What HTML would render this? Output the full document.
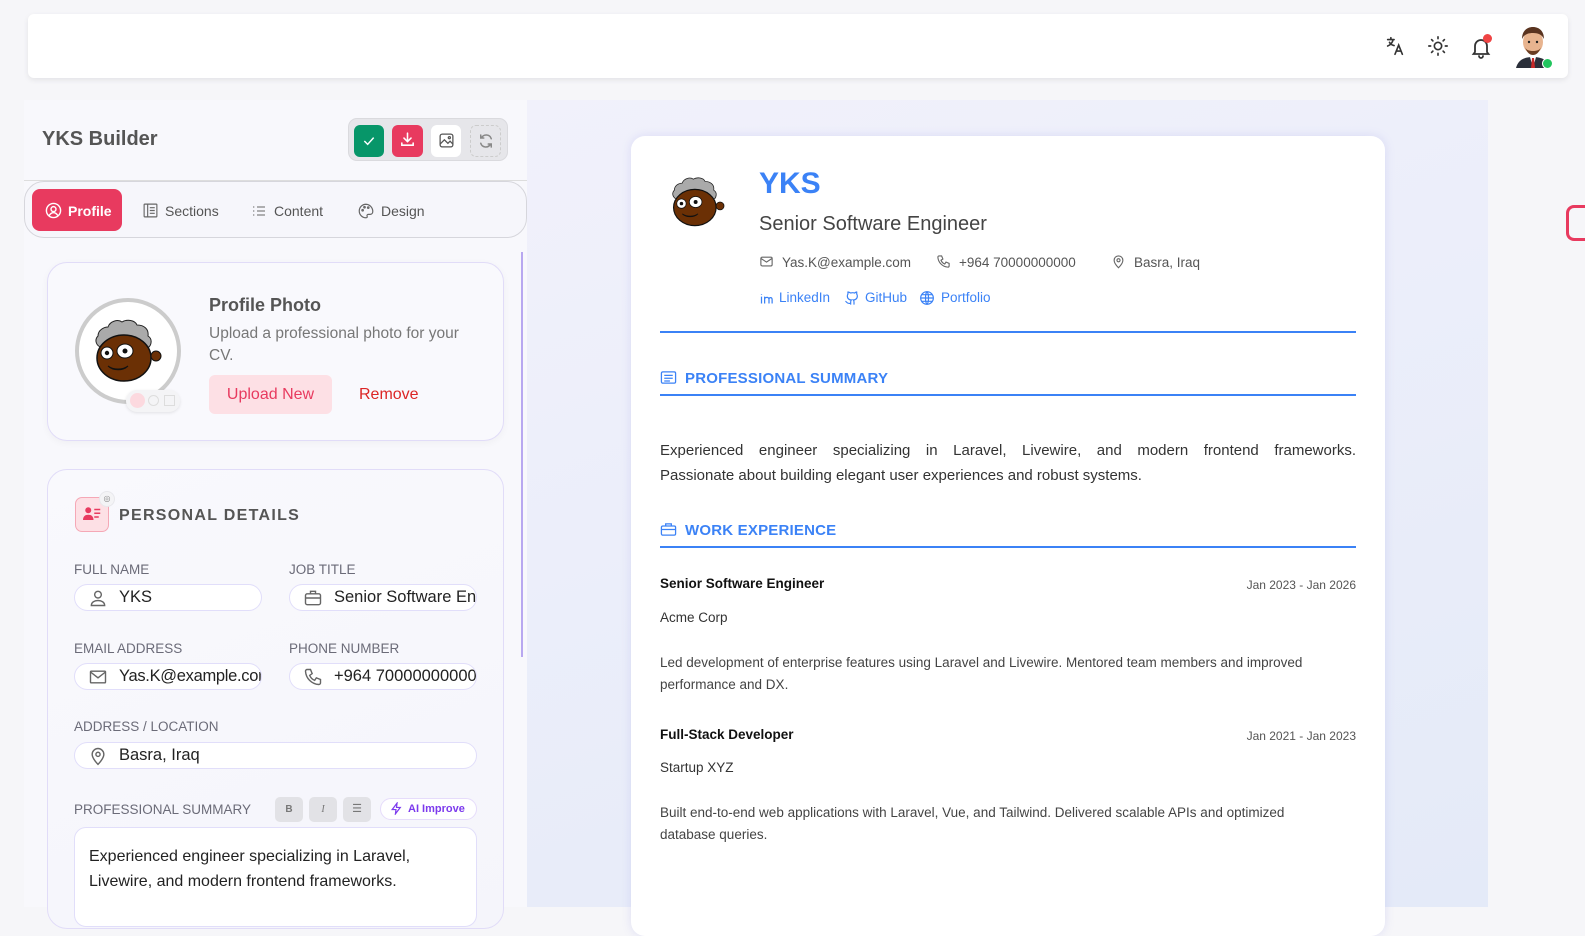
<!DOCTYPE html>
<html><head><meta charset="utf-8">
<style>
*{box-sizing:border-box;margin:0;padding:0}
body{width:1585px;height:907px;overflow:hidden;background:#f6f6f9;font-family:"Liberation Sans",sans-serif;position:relative;color:#333}
.a{position:absolute}
.hdr{left:28px;top:14px;width:1540px;height:64px;background:#fff;border-radius:6px;box-shadow:0 2px 6px rgba(0,0,0,.08)}
.left{left:24px;top:100px;width:503px;height:807px;background:#f8f8fc}
.prev{left:527px;top:100px;width:961px;height:807px;background:linear-gradient(160deg,#f1f1fb,#e4eaf8)}
.card{left:631px;top:136px;width:754px;height:800px;background:#fff;border-radius:14px;box-shadow:0 0 10px rgba(120,120,220,.18)}
.lbl{font-size:13.5px;color:#6b6b78;}
.inp{height:27px;border:1.5px solid #e1defa;border-radius:14px;background:#fff;font-size:16.5px;color:#222;padding-left:44px;line-height:24px;overflow:hidden;white-space:nowrap}
.inp svg{position:absolute;left:13px;top:3px}
.blue{color:#3b82f6}
.sh{font-weight:bold;font-size:15px;color:#3b82f6;letter-spacing:.2px}
.g{font-size:13.5px;color:#555}
</style></head><body>
<div class="a hdr"></div>
<svg class="a" style="left:1384px;top:35px" width="22" height="22" viewBox="0 0 24 24" fill="none" stroke="#333" stroke-width="1.8" stroke-linecap="round"><path d="M4 5h7M7.5 3v2M10 5c-1 4-3 6-6 7M6 8c1 2 3 3 5 3.5"/><path d="M12 21l4-10 4 10M13.5 17.5h5"/></svg>
<svg class="a" style="left:1427px;top:35px" width="22" height="22" viewBox="0 0 24 24" fill="none" stroke="#333" stroke-width="1.8" stroke-linecap="round"><circle cx="12" cy="12" r="4"/><path d="M12 2v2M12 20v2M2 12h2M20 12h2M5 5l1.4 1.4M17.6 17.6L19 19M5 19l1.4-1.4M17.6 6.4L19 5"/></svg>
<svg class="a" style="left:1469px;top:35px" width="24" height="24" viewBox="0 0 24 24" fill="none" stroke="#333" stroke-width="1.8" stroke-linecap="round"><path d="M6 17V11a6 6 0 0 1 12 0v6l1.5 2h-15z"/><path d="M10 21a2 2 0 0 0 4 0"/></svg>
<div class="a" style="left:1483px;top:34px;width:9px;height:9px;border-radius:50%;background:#ef4444"></div>
<svg class="a" style="left:1514px;top:24px" width="38" height="44" viewBox="0 0 38 44"><path d="M2 44c2-8 8-11 17-11s15 3 17 11z" fill="#2b2f3a"/><path d="M16 33l3 11 3-11z" fill="#fff"/><path d="M18 34h2l1 10h-4z" fill="#c62828"/><ellipse cx="19" cy="18" rx="10" ry="12" fill="#e8b48f"/><path d="M8 15c0-9 6-12 11-12s11 3 11 12c-2-4-5-6-11-6S10 11 8 15z" fill="#5a3420"/><path d="M11 23c2 6 5 8 8 8s6-2 8-8c-1 3-4 4-8 4s-7-1-8-4z" fill="#6b3d22"/><circle cx="15" cy="18" r="1.2" fill="#222"/><circle cx="23" cy="18" r="1.2" fill="#222"/></svg>
<div class="a" style="left:1542px;top:58px;width:11px;height:11px;border-radius:50%;background:#22c55e;border:1.5px solid #fff"></div>
<div class="a" style="left:1566px;top:205px;width:19px;height:36px;border:3px solid #e83a5f;border-right:none;border-radius:8px 0 0 8px"></div>

<div class="a left"></div>
<div class="a" style="left:24px;top:180px;width:503px;height:1px;background:#ddd"></div>
<div class="a" style="left:42px;top:128px;font-size:20px;font-weight:bold;color:#555">YKS Builder</div>
<div class="a" style="left:348px;top:118px;width:160px;height:43px;background:#e6e6ea;border-radius:9px;border:1px solid #dadade"></div>
<div class="a" style="left:354px;top:125px;width:30px;height:32px;background:#079669;border-radius:6px"></div>
<svg class="a" style="left:361px;top:133px" width="16" height="16" viewBox="0 0 24 24" fill="none" stroke="#fff" stroke-width="2.2"><path d="M5 12l5 5 9-10"/></svg>
<div class="a" style="left:392px;top:125px;width:31px;height:32px;background:#e83a5f;border-radius:6px"></div>
<svg class="a" style="left:399px;top:131px" width="17" height="17" viewBox="0 0 24 24" fill="none" stroke="#fff" stroke-width="2.2" stroke-linecap="round"><path d="M12 3v12M7 10l5 5 5-5M4 17v3h16v-3"/></svg>
<div class="a" style="left:431px;top:125px;width:30px;height:32px;background:#fff;border-radius:6px"></div>
<svg class="a" style="left:438px;top:132px" width="17" height="17" viewBox="0 0 24 24" fill="none" stroke="#555" stroke-width="1.8"><rect x="3" y="3" width="18" height="18" rx="3"/><path d="M3 17l6-6 5 5 3-3 4 4"/><circle cx="16" cy="8" r="1.5"/></svg>
<div class="a" style="left:470px;top:125px;width:31px;height:32px;border:1px dashed #ccc;border-radius:6px"></div>
<svg class="a" style="left:477px;top:132px" width="18" height="18" viewBox="0 0 24 24" fill="none" stroke="#888" stroke-width="2" stroke-linecap="round"><path d="M19 9a7 7 0 0 0-13-1M5 4v4h4M5 15a7 7 0 0 0 13 1M19 20v-4h-4"/></svg>

<div class="a" style="left:24px;top:181px;width:503px;height:57px;border:1px solid #d6d6dc;border-radius:20px;background:#f6f6fb"></div>
<div class="a" style="left:32px;top:189px;width:90px;height:42px;background:#e83a5f;border-radius:8px"></div>
<svg class="a" style="left:45px;top:202px" width="17" height="17" viewBox="0 0 24 24" fill="none" stroke="#fff" stroke-width="2"><circle cx="12" cy="12" r="10"/><circle cx="12" cy="10" r="3.5"/><path d="M6 19c2-3 4-4 6-4s4 1 6 4"/></svg>
<div class="a" style="left:68px;top:203px;font-size:14px;font-weight:bold;color:#fff">Profile</div>
<svg class="a" style="left:142px;top:202px" width="17" height="17" viewBox="0 0 24 24" fill="none" stroke="#666" stroke-width="1.6"><rect x="3" y="3" width="18" height="18" rx="1"/><path d="M8 3v18M11 8h7M11 12h7M11 16h7"/></svg>
<div class="a" style="left:165px;top:203px;font-size:14px;color:#555">Sections</div>
<svg class="a" style="left:251px;top:203px" width="16" height="16" viewBox="0 0 24 24" fill="none" stroke="#666" stroke-width="1.6"><path d="M9 6h12M9 12h12M9 18h12M3 6h2M3 12h2M3 18h2"/></svg>
<div class="a" style="left:274px;top:203px;font-size:14px;color:#555">Content</div>
<svg class="a" style="left:357px;top:202px" width="18" height="18" viewBox="0 0 24 24" fill="none" stroke="#666" stroke-width="1.6"><path d="M12 3a9 9 0 1 0 0 18c1.5 0 2-1 1.5-2s0-2.5 1.5-2.5h2.5A3.5 3.5 0 0 0 21 13 9.5 9.5 0 0 0 12 3z"/><circle cx="7.5" cy="11" r="1"/><circle cx="10" cy="7" r="1"/><circle cx="15" cy="7.5" r="1"/></svg>
<div class="a" style="left:381px;top:203px;font-size:14px;color:#555">Design</div>
<div class="a" style="left:521px;top:252px;width:2px;height:405px;background:#b8a8f0"></div>

<div class="a" style="left:47px;top:262px;width:457px;height:179px;border:1px solid #e1dcf8;border-radius:20px;background:#f9f9fd;box-shadow:0 2px 8px rgba(0,0,0,.04)"></div>
<div class="a" style="left:75px;top:298px;width:106px;height:106px;border-radius:50%;border:4px solid #ccc;background:#fff"></div>
<svg class="a" style="left:92px;top:318px" width="72" height="66" viewBox="0 0 72 66"><path d="M6 18c0-6 6-9 10-9 2-6 10-8 14-5 5-3 13-2 15 3 7 0 12 4 11 11 5 3 3 9 1 11H8C3 26 3 21 6 18z" fill="#aaa" stroke="#222" stroke-width="1"/><ellipse cx="32" cy="40" rx="27" ry="23" fill="#6b3005" stroke="#111" stroke-width="1.5"/><circle cx="64" cy="38" r="5" fill="#6b3005" stroke="#111"/><ellipse cx="15" cy="35" rx="6" ry="6" fill="#fff" stroke="#111"/><ellipse cx="33" cy="33" rx="8" ry="7" fill="#fff" stroke="#111"/><circle cx="15" cy="35" r="2.2" fill="#111"/><circle cx="33" cy="33" r="2.5" fill="#111"/><path d="M16 48c6 4 14 4 20 0-5 5-15 5-20 0z" fill="#fff" stroke="#111"/></svg>
<div class="a" style="left:126px;top:390px;width:54px;height:22px;border-radius:11px;background:#f4f4f6;box-shadow:0 1px 3px rgba(0,0,0,.1)"></div>
<div class="a" style="left:130px;top:393px;width:15px;height:15px;border-radius:50%;background:#fcd9df"></div>
<div class="a" style="left:148px;top:395px;width:11px;height:11px;border-radius:50%;border:1px solid #ddd"></div>
<div class="a" style="left:164px;top:395px;width:11px;height:11px;border:1px solid #ddd"></div>
<div class="a" style="left:209px;top:295px;font-size:18px;font-weight:bold;color:#555">Profile Photo</div>
<div class="a" style="left:209px;top:323px;width:275px;font-size:15.5px;line-height:22px;color:#777">Upload a professional photo for your CV.</div>
<div class="a" style="left:209px;top:375px;width:123px;height:39px;background:#fde0e5;border-radius:6px;font-size:16px;color:#e83a5f;text-align:center;line-height:39px">Upload New</div>
<div class="a" style="left:359px;top:386px;font-size:16px;color:#dc2626">Remove</div>

<div class="a" style="left:47px;top:469px;width:457px;height:460px;border:1px solid #e1dcf8;border-radius:20px;background:linear-gradient(160deg,#f9f9fd,#f5f5fb)"></div>
<div class="a" style="left:75px;top:497px;width:34px;height:35px;border-radius:7px;background:#fde0e5;border:1px solid #f5a8b6"></div>
<svg class="a" style="left:83px;top:506px" width="18" height="16" viewBox="0 0 24 20" fill="#e83a5f"><circle cx="7" cy="5" r="4"/><path d="M0 18c0-5 3-7 7-7s7 2 7 7z"/><rect x="15" y="3" width="8" height="2"/><rect x="15" y="8" width="8" height="2"/><rect x="15" y="13" width="6" height="2"/></svg>
<div class="a" style="left:99px;top:491px;width:16px;height:16px;border-radius:50%;background:#f4f4f6;border:1px solid #e8e8ec;font-size:8px;color:#888;text-align:center;line-height:14px">◎</div>
<div class="a" style="left:119px;top:507px;font-size:16px;font-weight:bold;color:#555;letter-spacing:1.3px">PERSONAL DETAILS</div>
<div class="a lbl" style="left:74px;top:562px">FULL NAME</div>
<div class="a lbl" style="left:289px;top:562px">JOB TITLE</div>
<div class="a inp" style="left:74px;top:584px;width:188px"><svg width="20" height="20" viewBox="0 0 24 24" fill="none" stroke="#666" stroke-width="1.7"><circle cx="12" cy="8" r="4"/><path d="M4 21c0-4 4-6 8-6s8 2 8 6z"/></svg>YKS</div>
<div class="a inp" style="left:289px;top:584px;width:188px"><svg width="20" height="20" viewBox="0 0 24 24" fill="none" stroke="#666" stroke-width="1.7"><rect x="3" y="7" width="18" height="13" rx="2"/><path d="M9 7V4h6v3M3 12h18"/></svg>Senior Software Engineer</div>
<div class="a lbl" style="left:74px;top:641px">EMAIL ADDRESS</div>
<div class="a lbl" style="left:289px;top:641px">PHONE NUMBER</div>
<div class="a inp" style="left:74px;top:663px;width:188px;letter-spacing:-.3px"><svg width="20" height="20" viewBox="0 0 24 24" fill="none" stroke="#666" stroke-width="1.7"><rect x="3" y="5" width="18" height="14" rx="1"/><path d="M3 6l9 7 9-7"/></svg>Yas.K@example.com</div>
<div class="a inp" style="left:289px;top:663px;width:188px"><svg width="20" height="20" viewBox="0 0 24 24" fill="none" stroke="#666" stroke-width="1.7"><path d="M5 3h4l2 5-3 2a11 11 0 0 0 6 6l2-3 5 2v4a2 2 0 0 1-2 2A17 17 0 0 1 3 5a2 2 0 0 1 2-2z"/></svg>+964 70000000000</div>
<div class="a lbl" style="left:74px;top:719px">ADDRESS / LOCATION</div>
<div class="a inp" style="left:74px;top:742px;width:403px"><svg width="20" height="20" viewBox="0 0 24 24" fill="none" stroke="#666" stroke-width="1.7"><path d="M12 22s7-7 7-12a7 7 0 0 0-14 0c0 5 7 12 7 12z"/><circle cx="12" cy="10" r="2.5"/></svg>Basra, Iraq</div>
<div class="a lbl" style="left:74px;top:802px">PROFESSIONAL SUMMARY</div>
<div class="a" style="left:275px;top:797px;width:28px;height:25px;background:#e2e2e6;border-radius:5px;font-size:10px;font-weight:bold;color:#777;text-align:center;line-height:25px">B</div>
<div class="a" style="left:309px;top:797px;width:28px;height:25px;background:#e2e2e6;border-radius:5px;font-size:10px;font-style:italic;color:#777;text-align:center;line-height:25px;font-family:'Liberation Serif',serif">I</div>
<div class="a" style="left:343px;top:797px;width:28px;height:25px;background:#e2e2e6;border-radius:5px;font-size:11px;color:#777;text-align:center;line-height:25px">☰</div>
<div class="a" style="left:380px;top:798px;width:97px;height:22px;border:1px solid #e6dcfb;border-radius:11px;background:#fff;font-size:11px;font-weight:bold;color:#7c3aed;line-height:20px;padding-left:27px">AI Improve</div>
<svg class="a" style="left:390px;top:802px" width="13" height="13" viewBox="0 0 24 24" fill="none" stroke="#7c3aed" stroke-width="2.2"><path d="M13 2L4 14h7l-1 8 9-12h-7z"/></svg>
<div class="a" style="left:74px;top:827px;width:403px;height:100px;border:1.5px solid #e1defa;border-radius:12px;background:#fff;padding:17px 0 0 14px;font-size:16px;line-height:24.5px;color:#222">Experienced engineer specializing in Laravel,<br>Livewire, and modern frontend frameworks.</div>

<div class="a prev"></div>
<div class="a card"></div>
<svg class="a" style="left:669px;top:176px" width="58" height="52" viewBox="0 0 72 66"><path d="M6 18c0-6 6-9 10-9 2-6 10-8 14-5 5-3 13-2 15 3 7 0 12 4 11 11 5 3 3 9 1 11H8C3 26 3 21 6 18z" fill="#aaa" stroke="#222" stroke-width="1"/><ellipse cx="32" cy="40" rx="27" ry="23" fill="#6b3005" stroke="#111" stroke-width="1.5"/><circle cx="64" cy="38" r="5" fill="#6b3005" stroke="#111"/><ellipse cx="15" cy="35" rx="6" ry="6" fill="#fff" stroke="#111"/><ellipse cx="33" cy="33" rx="8" ry="7" fill="#fff" stroke="#111"/><circle cx="15" cy="35" r="2.2" fill="#111"/><circle cx="33" cy="33" r="2.5" fill="#111"/><path d="M16 48c6 4 14 4 20 0-5 5-15 5-20 0z" fill="#fff" stroke="#111"/></svg>
<div class="a blue" style="left:759px;top:167px;font-size:30px;font-weight:bold">YKS</div>
<div class="a" style="left:759px;top:213px;font-size:20px;color:#444">Senior Software Engineer</div>
<svg class="a" style="left:759px;top:254px" width="15" height="15" viewBox="0 0 24 24" fill="none" stroke="#666" stroke-width="1.8"><rect x="3" y="5" width="18" height="14" rx="2"/><path d="M3 7l9 6 9-6"/></svg>
<div class="a g" style="left:782px;top:255px">Yas.K@example.com</div>
<svg class="a" style="left:936px;top:254px" width="15" height="15" viewBox="0 0 24 24" fill="none" stroke="#666" stroke-width="1.8"><path d="M5 3h4l2 5-3 2a11 11 0 0 0 6 6l2-3 5 2v4a2 2 0 0 1-2 2A17 17 0 0 1 3 5a2 2 0 0 1 2-2z"/></svg>
<div class="a g" style="left:959px;top:255px">+964 70000000000</div>
<svg class="a" style="left:1111px;top:254px" width="15" height="15" viewBox="0 0 24 24" fill="none" stroke="#666" stroke-width="1.8"><path d="M12 22s7-7 7-12a7 7 0 0 0-14 0c0 5 7 12 7 12z"/><circle cx="12" cy="10" r="2.5"/></svg>
<div class="a g" style="left:1134px;top:255px">Basra, Iraq</div>
<svg class="a" style="left:759px;top:291px" width="15" height="15" viewBox="0 0 24 24" fill="none" stroke="#3b82f6" stroke-width="2"><path d="M4 9v11M4 5v1M9 20V9M9 13c0-3 7-5 7 1v6M16 13c0-3 5-4 5 1v6"/></svg>
<div class="a blue" style="left:779px;top:290px;font-size:13.5px">LinkedIn</div>
<svg class="a" style="left:844px;top:290px" width="16" height="16" viewBox="0 0 24 24" fill="none" stroke="#3b82f6" stroke-width="1.8"><path d="M9 20c-5 1-5-3-7-3M15 22v-4c0-1 0-2-1-3 3 0 6-2 6-6 0-1-.5-2.5-1-3 .2-1 .2-2 0-3 0 0-1 0-3 1.5a10 10 0 0 0-6 0C7 3 6 3 6 3c-.2 1-.2 2 0 3-.6.6-1 2-1 3 0 4 3 6 6 6-1 1-1 2-1 3v4"/></svg>
<div class="a blue" style="left:865px;top:290px;font-size:13.5px">GitHub</div>
<svg class="a" style="left:919px;top:290px" width="16" height="16" viewBox="0 0 24 24" fill="none" stroke="#3b82f6" stroke-width="1.8"><circle cx="12" cy="12" r="9.5"/><path d="M2.5 12h19M12 2.5c3 3 3 16 0 19M12 2.5c-3 3-3 16 0 19M4 7h16M4 17h16"/></svg>
<div class="a blue" style="left:941px;top:290px;font-size:13.5px">Portfolio</div>
<div class="a" style="left:660px;top:331px;width:696px;height:2px;background:#3b82f6"></div>
<svg class="a" style="left:660px;top:370px" width="17" height="15" viewBox="0 0 24 20" fill="none" stroke="#3b82f6" stroke-width="1.8"><rect x="2" y="2" width="20" height="16" rx="2"/><path d="M6 7h12M6 11h12M6 15h8"/></svg>
<div class="a sh" style="left:685px;top:370px">PROFESSIONAL SUMMARY</div>
<div class="a" style="left:660px;top:394px;width:696px;height:2px;background:#3b82f6"></div>
<div class="a" style="left:660px;top:438px;width:696px;font-size:15px;line-height:25px;color:#333;text-align:justify;text-align-last:justify">Experienced engineer specializing in Laravel, Livewire, and modern frontend frameworks.</div>
<div class="a" style="left:660px;top:463px;width:696px;font-size:15px;line-height:25px;color:#333">Passionate about building elegant user experiences and robust systems.</div>
<svg class="a" style="left:660px;top:522px" width="17" height="15" viewBox="0 0 24 20" fill="none" stroke="#3b82f6" stroke-width="1.8"><rect x="2" y="5" width="20" height="13" rx="2"/><path d="M8 5V2h8v3M2 10h20"/></svg>
<div class="a sh" style="left:685px;top:522px">WORK EXPERIENCE</div>
<div class="a" style="left:660px;top:546px;width:696px;height:2px;background:#3b82f6"></div>
<div class="a" style="left:660px;top:576px;font-size:13.5px;font-weight:bold;color:#111">Senior Software Engineer</div>
<div class="a" style="left:1200px;top:578px;width:156px;text-align:right;font-size:12px;color:#555">Jan 2023 - Jan 2026</div>
<div class="a" style="left:660px;top:610px;font-size:13.5px;color:#333">Acme Corp</div>
<div class="a" style="left:660px;top:652px;width:700px;font-size:13.5px;line-height:22px;color:#444">Led development of enterprise features using Laravel and Livewire. Mentored team members and improved<br>performance and DX.</div>
<div class="a" style="left:660px;top:727px;font-size:13.5px;font-weight:bold;color:#111">Full-Stack Developer</div>
<div class="a" style="left:1200px;top:729px;width:156px;text-align:right;font-size:12px;color:#555">Jan 2021 - Jan 2023</div>
<div class="a" style="left:660px;top:760px;font-size:13.5px;color:#333">Startup XYZ</div>
<div class="a" style="left:660px;top:802px;width:700px;font-size:13.5px;line-height:22px;color:#444">Built end-to-end web applications with Laravel, Vue, and Tailwind. Delivered scalable APIs and optimized<br>database queries.</div>
</body></html>
